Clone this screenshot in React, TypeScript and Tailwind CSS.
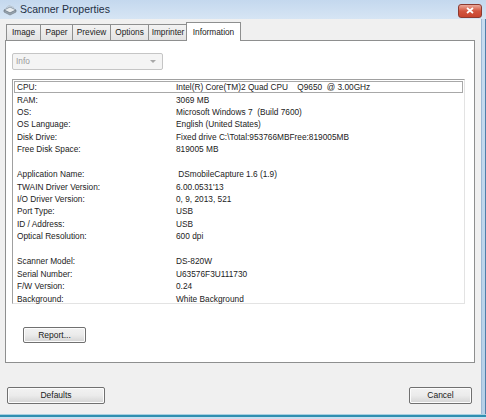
import React from "react";

const tabs = [
  { label: "Image", w: "w-[35px]" },
  { label: "Paper", w: "w-[33px]" },
  { label: "Preview", w: "w-[39px]" },
  { label: "Options", w: "w-[39px]" },
  { label: "Imprinter", w: "w-[40px]" },
] as const;

const rows: [string, string][] = [
  ["CPU:", "Intel(R) Core(TM)2 Quad CPU    Q9650  @ 3.00GHz"],
  ["RAM:", "3069 MB"],
  ["OS:", "Microsoft Windows 7  (Build 7600)"],
  ["OS Language:", "English (United States)"],
  ["Disk Drive:", "Fixed drive C:\\Total:953766MBFree:819005MB"],
  ["Free Disk Space:", "819005 MB"],
  ["", ""],
  ["Application Name:", " DSmobileCapture 1.6 (1.9)"],
  ["TWAIN Driver Version:", "6.00.0531'13"],
  ["I/O Driver Version:", "0, 9, 2013, 521"],
  ["Port Type:", "USB"],
  ["ID / Address:", "USB"],
  ["Optical Resolution:", "600 dpi"],
  ["", ""],
  ["Scanner Model:", "DS-820W"],
  ["Serial Number:", "U63576F3U111730"],
  ["F/W Version:", "0.24"],
  ["Background:", "White Background"],
];

function WinButton({ label, className }: { label: string; className: string }) {
  return (
    <button
      type="button"
      className={`flex items-center justify-center rounded-[2px] border border-[#707070] bg-gradient-to-b from-[#f2f2f2] via-[#ebebeb] to-[#d4d4d4] text-[8.5px] text-[#1a1a1a] shadow-[inset_0_0_0_1px_#fcfcfc] ${className}`}
    >
      {label}
    </button>
  );
}

export default function App() {
  return (
    <div
      className="flex h-[419px] w-[486px] flex-col overflow-hidden bg-[#f0f0f0] text-[#222]"
      style={{ fontFamily: '"Liberation Sans", Arial, sans-serif' }}
    >
      {/* title bar */}
      <div className="flex h-[19px] shrink-0 items-center bg-gradient-to-b from-[#c4d8ee] to-[#d6e5f4] pl-[3px] pr-[4px]">
        <svg width="14" height="12" viewBox="0 0 14 12" className="mr-[3px]">
          <path d="M1 6 L7 3 L13 6 L7 9 Z" fill="#e8ecef" stroke="#7d8a96" strokeWidth="0.8" />
          <path d="M1 6 L1 8 L7 11 L13 8 L13 6 L7 9 Z" fill="#9aa6b1" stroke="#6b7782" strokeWidth="0.6" />
          <path d="M3 4 L6 1.5 L11 3.5" fill="none" stroke="#b7c1ca" strokeWidth="0.8" />
        </svg>
        <span className="text-[10.5px] text-[#1e2f44]">Scanner Properties</span>
        <div className="ml-auto mt-[2px] flex h-[14px] w-[24px] items-center justify-center rounded-[3px] border border-[#8d3a30] bg-gradient-to-b from-[#e9a99c] via-[#d2553f] to-[#c8442e]">
          <svg width="8" height="7" viewBox="0 0 8 7">
            <path d="M1 1 L7 6 M7 1 L1 6" stroke="#ffffff" strokeWidth="1.8" />
          </svg>
        </div>
      </div>

      <div className="flex min-h-0 flex-1">
        <div className="flex flex-1 flex-col pl-[5px] pr-[6px]">
          {/* tabs */}
          <div className="mt-[3px] flex h-[18px] items-end pl-[1px]">
            {tabs.map((t) => (
              <div
                key={t.label}
                className={`flex h-[16px] ${t.w} items-center justify-center border border-b-0 border-[#8e8f8f] bg-gradient-to-b from-[#f3f3f3] to-[#e3e3e3] text-[8.3px] -ml-px first:ml-0`}
              >
                {t.label}
              </div>
            ))}
            <div className="relative z-10 -mb-px -ml-[2px] flex h-[19px] w-[55px] items-center justify-center border border-b-0 border-[#8e8f8f] bg-white text-[8.3px]">
              Information
            </div>
          </div>

          {/* panel */}
          <div className="flex h-[323px] w-[470px] flex-col border border-[#8e8f8f] bg-white pl-[6px]">
            <div className="mt-[12px] flex h-[17px] w-[151px] items-center justify-between rounded-[2px] border border-[#c5c5c5] bg-[#f4f4f4] pl-[3px] pr-[6px] text-[8.3px] text-[#9a9a9a]">
              <span>Info</span>
              <svg width="6" height="4" viewBox="0 0 6 4">
                <path d="M0 0 L6 0 L3 3 Z" fill="#a8a8a8" />
              </svg>
            </div>

            <div className="mt-[9px] flex h-[225px] w-[453px] flex-col border border-t-[#a0a0a0] border-l-[#a0a0a0] border-r-[#e3e3e3] border-b-[#e3e3e3] bg-white py-[1px] pl-[1px] pr-[1px]">
              {rows.map(([k, v], i) => (
                <div
                  key={i}
                  className={`flex h-[12.45px] shrink-0 items-center text-[8.3px] leading-none ${
                    i === 0 ? "border border-[#a8a8a8]" : "border border-transparent"
                  }`}
                >
                  <span className="w-[161px] pl-[2px]">{k}</span>
                  <span className="whitespace-pre">{v}</span>
                </div>
              ))}
            </div>

            <WinButton label="Report..." className="ml-[11px] mt-[23px] h-[16px] w-[63px]" />
          </div>

          {/* bottom buttons */}
          <div className="mt-[24px] flex items-center justify-between pl-[2px] pr-[3px]">
            <WinButton label="Defaults" className="h-[17px] w-[98px]" />
            <WinButton label="Cancel" className="h-[17px] w-[63px]" />
          </div>
        </div>
        {/* right window frame */}
        <div className="w-[5px] shrink-0 border-l border-[#9db9d6] border-r border-r-[#4f7fa8] bg-gradient-to-b from-[#c8dcf0] to-[#b6d0e8]" />
      </div>
      <div className="h-[5px] shrink-0 border-t border-[#a9cfe0] bg-[#c9dff0]">
        <div className="h-[2px] bg-[#2f8fb0]" />
      </div>
    </div>
  );
}
